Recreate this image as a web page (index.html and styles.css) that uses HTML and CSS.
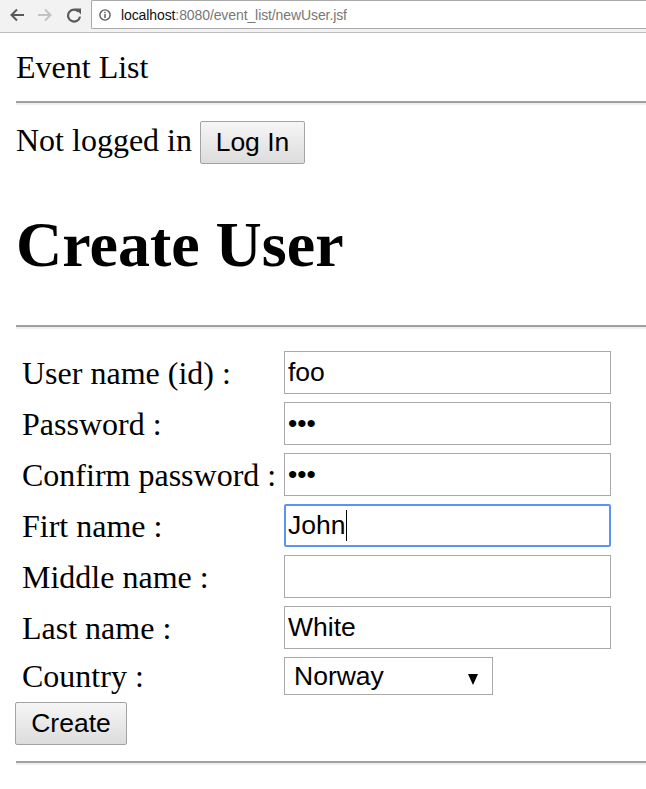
FILE: index.html
```html
<!DOCTYPE html>
<html lang="en">
<head>
<meta charset="utf-8">
<title>Create User</title>
<link rel="stylesheet" href="styles.css">
</head>
<body>
<header class="browser">
  <nav class="nav-buttons">
    <svg class="nav-icon back" viewBox="0 0 16 16" width="16" height="16"><path d="M15 8H2.5M8 2.5L2.5 8l5.5 5.5" fill="none" stroke="currentColor" stroke-width="2"/></svg>
    <svg class="nav-icon forward" viewBox="0 0 16 16" width="16" height="16"><path d="M1 8h12.5M8 2.5L13.5 8 8 13.5" fill="none" stroke="currentColor" stroke-width="2"/></svg>
    <svg class="nav-icon reload" viewBox="0 0 16 16" width="16" height="16"><path d="M12.6 4.6A6 6 0 1 0 14 9.6" fill="none" stroke="currentColor" stroke-width="2.2"/><path d="M9 1.6h6v6z" fill="currentColor"/></svg>
  </nav>
  <div class="omnibox">
    <svg class="info-icon" viewBox="0 0 12 12" width="12" height="12"><circle cx="6" cy="6" r="5.1" fill="none" stroke="currentColor" stroke-width="1.4"/><rect x="5.3" y="5" width="1.4" height="4" fill="currentColor"/><rect x="5.3" y="2.8" width="1.4" height="1.4" fill="currentColor"/></svg>
    <span class="url"><span class="host">localhost</span><span class="path">:8080/event_list/newUser.jsf</span></span>
  </div>
</header>
<main class="page">
  <div class="site-title">Event List</div>
  <hr class="rule">
  <div class="login-row"><span>Not logged in</span><button class="btn login-btn" type="button">Log In</button></div>
  <h1 class="heading">Create User</h1>
  <hr class="rule">
  <form class="user-form">
    <div class="fields">
      <label class="label">User name (id) :</label><input class="field" type="text" value="foo">
      <label class="label">Password :</label><input class="field" type="password" value="abc">
      <label class="label">Confirm password :</label><input class="field" type="password" value="abc">
      <label class="label">Firt name :</label><span class="focus-wrap"><input class="field focused" type="text" value="John"><span class="caret"></span></span>
      <label class="label">Middle name :</label><input class="field" type="text" value="">
      <label class="label">Last name :</label><input class="field" type="text" value="White">
      <label class="label">Country :</label><span class="select-wrap"><select class="select"><option>Norway</option></select></span>
    </div>
    <button class="btn create-btn" type="button">Create</button>
  </form>
  <hr class="rule">
</main>
</body>
</html>
```
FILE: styles.css
```css
html, body {
  margin: 0;
  padding: 0;
  background: #ffffff;
}

body {
  font-family: "Liberation Serif", "Times New Roman", serif;
  font-size: 32px;
  color: #000;
  overflow: hidden;
}

/* browser chrome */
.browser {
  display: flex;
  align-items: flex-start;
  height: 32px;
  background: #f2f2f2;
  border-bottom: 1px solid #bdbdbd;
}

.nav-buttons {
  display: flex;
  align-items: center;
  height: 29px;
  padding-left: 9px;
  gap: 12px;
  width: 82px;
}

.nav-icon { display: block; }
.nav-icon.back { color: #5a5a5a; }
.nav-icon.forward { color: #c3c3c3; }
.nav-icon.reload { color: #5a5a5a; margin-left: 1px; }

.omnibox {
  flex: 1;
  display: flex;
  align-items: center;
  height: 27px;
  background: #fff;
  border: 1px solid #aaaaaa;
  border-right: none;
  border-radius: 2px 0 0 2px;
  padding-left: 7px;
}

.info-icon {
  color: #5a5a5a;
  margin-right: 10px;
}

.url {
  font-family: "Liberation Sans", Arial, sans-serif;
  font-size: 14px;
  letter-spacing: -0.1px;
}

.host { color: #111; }
.path { color: #777; }

/* page */
.page {
  padding: 16px 0 0 16px;
}

.site-title {
  height: 36px;
  line-height: 36px;
}

.rule {
  margin: 16px 0;
  height: 0;
  border: none;
  border-top: 2px solid #a0a0a0;
  border-bottom: 2px solid #eeeeee;
}

.login-row {
  display: flex;
  align-items: baseline;
  gap: 8px;
  height: 44px;
}

.login-row span {
  line-height: 36px;
}

.btn {
  font-family: "Liberation Sans", Arial, sans-serif;
  font-size: 26.5px;
  color: #000;
  background: linear-gradient(#f6f6f6, #dcdcdc);
  border: 1px solid #a3a3a3;
  border-radius: 2px;
  height: 43px;
  padding: 0;
  margin: 0;
  line-height: 41px;
  text-align: center;
}

.login-btn {
  width: 105px;
}

.heading {
  font-size: 64px;
  font-weight: bold;
  line-height: 74px;
  margin: 43px 0;
}

.user-form {
  display: flex;
  flex-direction: column;
  align-items: flex-start;
}

.fields {
  display: grid;
  grid-template-columns: 262px 327px;
  grid-template-rows: repeat(6, 43px) 38px;
  row-gap: 8px;
  align-items: center;
  padding: 6px 0 7px 6px;
}

.label {
  line-height: 36px;
  white-space: nowrap;
}

.field {
  display: block;
  box-sizing: border-box;
  width: 327px;
  height: 43px;
  margin: 0;
  padding: 0 3px;
  border: 1px solid #a9a9a9;
  border-radius: 0;
  background: #fff;
  font-family: "Liberation Sans", Arial, sans-serif;
  font-size: 26.5px;
  color: #000;
  outline: none;
}

.focus-wrap {
  position: relative;
  display: block;
}

.field.focused {
  border: 2px solid #5a95f5;
  border-radius: 2px;
  padding: 0 2px;
}

.caret {
  position: absolute;
  left: 62px;
  top: 6px;
  width: 1px;
  height: 31px;
  background: #000;
}

.select-wrap {
  position: relative;
  display: block;
  width: 209px;
  height: 38px;
}

.select-wrap::after {
  content: "";
  position: absolute;
  left: 184px;
  top: 17px;
  width: 0;
  height: 0;
  border-left: 5.5px solid transparent;
  border-right: 5.5px solid transparent;
  border-top: 11px solid #000;
}

.select {
  display: block;
  -webkit-appearance: none;
  appearance: none;
  box-sizing: border-box;
  width: 209px;
  height: 38px;
  margin: 0;
  padding: 0 0 0 9px;
  border: 1px solid #a9a9a9;
  border-radius: 0;
  background: #fff;
  font-family: "Liberation Sans", Arial, sans-serif;
  font-size: 26.5px;
  color: #000;
}

.create-btn {
  width: 112px;
  margin-left: -1px;
}
```
